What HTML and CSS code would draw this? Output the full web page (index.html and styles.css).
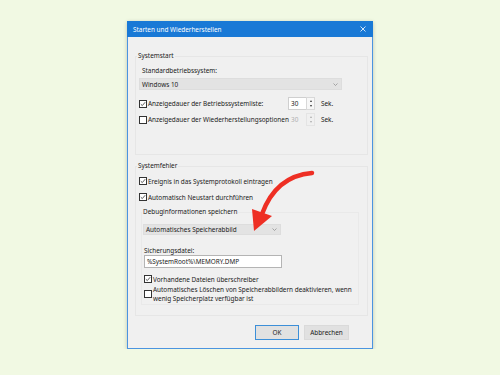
FILE: index.html
```html
<!DOCTYPE html>
<html lang="de">
<head>
  <meta charset="UTF-8">
  <title>Starten und Wiederherstellen</title>
  <link rel="stylesheet" href="styles.css">
</head>
<body>
  <div class="window">
    <div class="titlebar">
      <span>Starten und Wiederherstellen</span>
      <svg class="close" width="6" height="6" viewBox="0 0 6 6"><path d="M0.5 0.5L5.5 5.5M5.5 0.5L0.5 5.5" stroke="#fff" stroke-width="0.8"/></svg>
    </div>

    <div class="body">
      <!-- Systemstart -->
      <fieldset class="group g1">
        <legend>Systemstart</legend>
        <div class="label">Standardbetriebssystem:</div>
        <div class="select os">
          <span>Windows 10</span>
          <svg class="chev" width="5" height="3" viewBox="0 0 5 3"><path d="M0.5 0.5L2.5 2.5L4.5 0.5" fill="none" stroke="#888" stroke-width="0.7"/></svg>
        </div>
        <div class="row spin-row">
          <span class="cb checked"><svg width="6" height="6" viewBox="0 0 6 6"><path d="M0.8 3.2L2.3 4.6L5.2 1.2" fill="none" stroke="#333" stroke-width="0.8"/></svg></span>
          <span class="spin-text">Anzeigedauer der Betriebssystemliste:</span>
          <span class="spin">
            <span class="spin-value">30</span>
            <span class="spin-arrows"><i class="up"></i><i class="down"></i></span>
          </span>
          <span class="unit">Sek.</span>
        </div>
        <div class="row spin-row second">
          <span class="cb"></span>
          <span class="spin-text">Anzeigedauer der Wiederherstellungsoptionen</span>
          <span class="spin disabled">
            <span class="spin-value">30</span>
            <span class="spin-arrows"><i class="up"></i><i class="down"></i></span>
          </span>
          <span class="unit">Sek.</span>
        </div>
      </fieldset>

      <!-- Systemfehler -->
      <fieldset class="group g2">
        <legend>Systemfehler</legend>
        <div class="row first">
          <span class="cb checked"><svg width="6" height="6" viewBox="0 0 6 6"><path d="M0.8 3.2L2.3 4.6L5.2 1.2" fill="none" stroke="#333" stroke-width="0.8"/></svg></span>
          <span>Ereignis in das Systemprotokoll eintragen</span>
        </div>
        <div class="row">
          <span class="cb checked"><svg width="6" height="6" viewBox="0 0 6 6"><path d="M0.8 3.2L2.3 4.6L5.2 1.2" fill="none" stroke="#333" stroke-width="0.8"/></svg></span>
          <span>Automatisch Neustart durchführen</span>
        </div>

        <fieldset class="group inner">
          <legend>Debuginformationen speichern</legend>
          <div class="select dump">
            <span>Automatisches Speicherabbild</span>
            <svg class="chev" width="5" height="3" viewBox="0 0 5 3"><path d="M0.5 0.5L2.5 2.5L4.5 0.5" fill="none" stroke="#888" stroke-width="0.7"/></svg>
          </div>
          <div class="label file-label">Sicherungsdatei:</div>
          <div class="textbox">%SystemRoot%\MEMORY.DMP</div>
          <div class="row overwrite">
            <span class="cb checked"><svg width="6" height="6" viewBox="0 0 6 6"><path d="M0.8 3.2L2.3 4.6L5.2 1.2" fill="none" stroke="#333" stroke-width="0.8"/></svg></span>
            <span>Vorhandene Dateien überschreiber</span>
          </div>
          <div class="row multi">
            <span class="cb"></span>
            <span>Automatisches Löschen von Speicherabbildern deaktivieren, wenn<br>wenig Speicherplatz verfügbar ist</span>
          </div>
        </fieldset>
      </fieldset>

      <div class="buttons">
        <button class="btn default">OK</button>
        <button class="btn">Abbrechen</button>
      </div>
    </div>

    <!-- roter Pfeil -->
    <svg class="arrow" width="246" height="328" viewBox="0 0 246 328">
      <path d="M184 152 Q148 155 134 193" fill="none" stroke="#ee2f24" stroke-width="4.5" stroke-linecap="round"/>
      <polygon points="124,188 144,195 126,210" fill="#ee2f24"/>
    </svg>
  </div>
</body>
</html>
```

FILE: styles.css
```css
body {
  margin: 0;
  background-color: #f1f9e3;
  font-family: "Noto Sans", "Open Sans", sans-serif;
  font-size: 6.4px;
  color: #1a1a1a;
}

.window {
  position: relative;
  box-sizing: border-box;
  width: 246px;
  height: 328px;
  margin: 21px 0 0 127px;
  background-color: #f0f0f0;
  border: 1px solid #4b94e0;
  border-top: none;
  box-shadow: 0 1px 4px rgba(0, 0, 0, 0.22);
}

.titlebar {
  height: 16px;
  margin: 0 -1px;
  padding: 0 7px 0 6px;
  background-color: #1979d6;
  color: #fff;
  display: flex;
  align-items: center;
  justify-content: space-between;
}

.body {
  padding: 14px 0 0 7px;
}

.group {
  box-sizing: border-box;
  margin: 0;
  padding: 0 0 0 4px;
  border: 1px solid #e6e6e6;
  min-width: 0;
}

.group legend {
  line-height: 10px;
  padding: 0 1px;
  margin-left: -3px;
}

.g1 {
  width: 233px;
  height: 104px;
}

.g2 {
  width: 233px;
  height: 155px;
  margin-top: 6px;
}

.label {
  line-height: 10px;
  padding-left: 2px;
  margin-top: 5px;
}

.select {
  box-sizing: border-box;
  display: flex;
  align-items: center;
  justify-content: space-between;
  background-color: #e3e3e3;
  border: 1px solid #dddddd;
  padding: 0 3px 0 2px;
}

.select.os {
  width: 203px;
  height: 12px;
  margin: 2px 0 0 -1px;
}

.row {
  display: flex;
  align-items: center;
  margin-left: -1px;
}

.cb {
  box-sizing: border-box;
  width: 8px;
  height: 8px;
  border: 1px solid #333;
  background-color: #fff;
  margin-right: 1px;
  flex-shrink: 0;
  display: flex;
  align-items: center;
  justify-content: center;
}

.spin-row {
  height: 13px;
  margin-top: 7px;
}

.spin-row.second {
  margin-top: 3px;
}

.spin-text {
  width: 140px;
  white-space: nowrap;
}

.spin {
  display: flex;
  height: 13px;
}

.spin-value {
  box-sizing: border-box;
  width: 18px;
  border: 1px solid #cfcfcf;
  border-right: none;
  background-color: #fff;
  padding: 2px 0 0 2px;
  line-height: 8px;
}

.spin-arrows {
  box-sizing: border-box;
  width: 9px;
  border: 1px solid #d8d8d8;
  background-color: #f7f7f7;
  display: flex;
  flex-direction: column;
  align-items: center;
  justify-content: space-around;
}

.spin-arrows i {
  width: 0;
  height: 0;
  border-left: 1.5px solid transparent;
  border-right: 1.5px solid transparent;
}

.spin-arrows .up {
  border-bottom: 2px solid #333;
}

.spin-arrows .down {
  border-top: 2px solid #333;
}

.spin.disabled .spin-value {
  background-color: transparent;
  border-color: transparent;
  color: #b0b0b0;
}

.spin.disabled .spin-arrows {
  background-color: transparent;
  border-color: #e4e4e4;
}

.spin.disabled .spin-arrows .up {
  border-bottom-color: #aaa;
}

.spin.disabled .spin-arrows .down {
  border-top-color: #aaa;
}

.unit {
  margin-left: 6px;
}

.g2 .row {
  height: 10px;
  margin-top: 6px;
}

.g2 .row.first {
  margin-top: 5px;
}

.inner {
  width: 218px;
  height: 98px;
  margin: 5px 0 0 1px;
  padding-left: 2px;
  border-color: #e9e9e9;
}

.inner legend {
  margin-left: -2px;
}

.select.dump {
  width: 138px;
  height: 11px;
  margin: 7px 0 0 -1px;
}

.file-label {
  padding-left: 0;
  margin-top: 11px;
  line-height: 9px;
}

.textbox {
  box-sizing: border-box;
  width: 138px;
  height: 13px;
  background-color: #fff;
  border: 1px solid #b4b4b4;
  padding: 2px 0 0 2px;
  line-height: 8px;
}

.g2 .inner .row {
  margin-left: 0;
}

.g2 .inner .row.overwrite {
  margin-top: 6px;
}

.g2 .inner .row.multi {
  height: 18px;
  margin-top: 1px;
  line-height: 9px;
}

.buttons {
  display: flex;
  justify-content: flex-end;
  gap: 5px;
  margin-top: 9px;
  padding-right: 23px;
}

.btn {
  box-sizing: border-box;
  height: 15px;
  padding: 0;
  font-family: inherit;
  font-size: 6.4px;
  color: #1a1a1a;
  background-color: #e1e1e1;
  border: 1px solid #dadada;
}

.btn.default {
  width: 44px;
  border-color: #3c8fd8;
}

.btn + .btn {
  width: 45px;
}

.arrow {
  position: absolute;
  left: 0;
  top: 0;
  pointer-events: none;
}
```
